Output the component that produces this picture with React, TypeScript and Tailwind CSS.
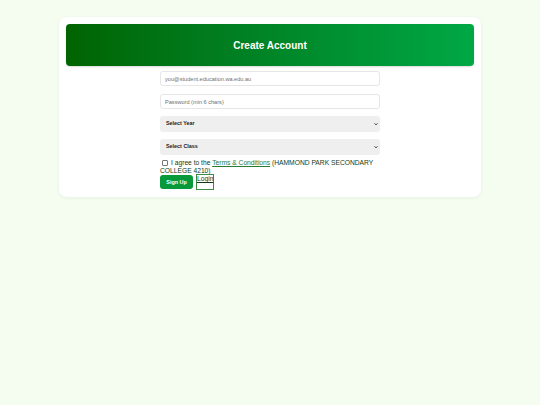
import { useState } from "react";

export default function App() {
  const [agree, setAgree] = useState(false);

  return (
    <div
      className="min-h-[405px] w-full bg-[#f5fdf1] pt-[17px]"
      style={{ fontFamily: '"Liberation Sans", Arial, sans-serif' }}
    >
      <div className="mx-auto w-[422px] rounded-[8px] bg-white p-[7px] shadow-[0_1px_4px_rgba(0,0,0,0.06)]">
        <div className="flex h-[42px] items-center justify-center rounded-[4px] bg-gradient-to-r from-[#006400] to-[#00a845] shadow-[0_1px_2px_rgba(0,0,0,0.15)]">
          <h1 className="text-[10px] font-bold text-white">Create Account</h1>
        </div>

        <form className="mx-auto mt-[5px] flex w-[220px] flex-col">
          <input
            type="email"
            placeholder="you@student.education.wa.edu.au"
            className="block h-[15px] rounded-[3px] border border-[#e6e6e6] px-[4px] text-[5.6px] text-[#333] outline-none placeholder:text-[#6f6f6f]"
          />
          <input
            type="password"
            placeholder="Password (min 6 chars)"
            className="mt-[8px] block h-[15px] rounded-[3px] border border-[#e6e6e6] px-[4px] text-[5.6px] text-[#333] outline-none placeholder:text-[#6f6f6f]"
          />

          <div className="relative mt-[7px] h-[16px] leading-none">
            <select className="block h-[16px] w-full appearance-none rounded-[3px] bg-[#efefef] px-[6px] text-[5.4px] font-bold text-[#222] outline-none">
              <option>Select Year</option>
            </select>
            <Chevron />
          </div>
          <div className="relative mt-[7px] h-[16px] leading-none">
            <select className="block h-[16px] w-full appearance-none rounded-[3px] bg-[#efefef] px-[6px] text-[5.4px] font-bold text-[#222] outline-none">
              <option>Select Class</option>
            </select>
            <Chevron />
          </div>

          <label className="mt-[4px] block h-[16px] text-[6.7px] leading-[8px] text-[#123a16]">
            <input
              type="checkbox"
              checked={agree}
              onChange={(e) => setAgree(e.target.checked)}
              className="relative top-[0.5px] mr-[3px] ml-[2px] inline-block h-[6px] w-[6px] appearance-none rounded-[1px] border border-[#767676] bg-white align-baseline"
            />
            I agree to the{" "}
            <a href="#" className="text-[#2a7a32] underline">
              Terms &amp; Conditions
            </a>{" "}
            (HAMMOND PARK SECONDARY COLLEGE 4210)
          </label>

          <div className="-mt-[1px] flex items-start gap-[3px]">
            <button
              type="button"
              className="mt-[1px] h-[14px] w-[33px] rounded-[3px] bg-[#089a3a] text-[5.4px] font-bold text-white"
            >
              Sign Up
            </button>
            <a
              href="#"
              className="block h-[16px] w-[18px] border border-[#3d8a46] text-center text-[6.7px] leading-[8px] text-[#123a16] underline"
            >
              Login
            </a>
          </div>
        </form>
      </div>
    </div>
  );
}

function Chevron() {
  return (
    <svg
      viewBox="0 0 10 10"
      className="pointer-events-none absolute top-1/2 right-[2px] h-[4px] w-[4px] -translate-y-1/2"
    >
      <path d="M1.5 3.5 5 7l3.5-3.5" fill="none" stroke="#222" strokeWidth="2.4" />
    </svg>
  );
}
